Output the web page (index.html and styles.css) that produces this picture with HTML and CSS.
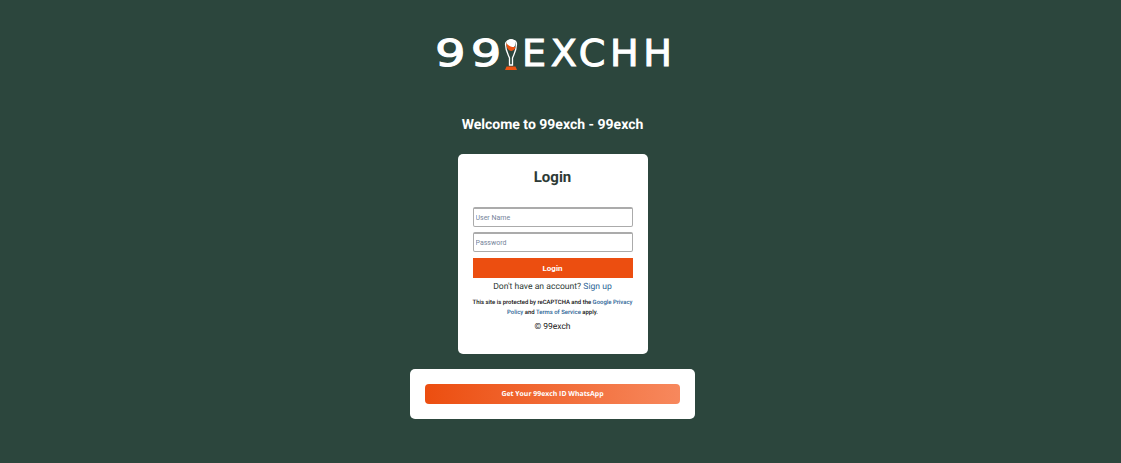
FILE: index.html
```html
<!DOCTYPE html>
<html lang="en">
<head>
  <meta charset="UTF-8">
  <title>99exch</title>
  <link rel="stylesheet" href="styles.css">
</head>
<body>
  <div class="pagina">
    <div class="logo">
      <span class="logo-txt logo-num">99</span>
      <svg class="copa" width="16" height="33" viewBox="0 0 16 33">
        <path d="M2.5 6 C2.5 1 13.5 1 13.5 6 C13.5 13 10.5 17 9.5 20 L9.5 27 L6.5 27 L6.5 20 C5.5 17 2.5 13 2.5 6 Z" fill="none" stroke="#fff" stroke-width="1.3"/>
        <circle cx="8" cy="5.5" r="4.6" fill="#fff"/>
        <path d="M3.4 5 C5 8 9 9.5 12.6 8.8 C12 12.5 8.5 14 5.8 12 C4 10.5 3.2 7.5 3.4 5 Z" fill="#ee5312"/>
        <path d="M3.5 28.5 H12.5 L14 32 H2 Z" fill="#ee5312"/>
      </svg>
      <span class="logo-txt logo-letras">EXCHH</span>
    </div>

    <h2 class="bienvenida">Welcome to 99exch - 99exch</h2>

    <div class="tarjeta">
      <h1>Login</h1>
      <input class="campo" type="text" placeholder="User Name">
      <input class="campo" type="password" placeholder="Password">
      <button class="btn-login">Login</button>
      <p class="registro">Don't have an account? <a href="#">Sign up</a></p>
      <p class="legal">This site is protected by reCAPTCHA and the <a href="#">Google Privacy Policy</a> and <a href="#">Terms of Service</a> apply.</p>
      <p class="copy">© 99exch</p>
    </div>

    <div class="promo">
      <a class="btn-whatsapp" href="#">Get Your 99exch ID WhatsApp</a>
    </div>
  </div>
</body>
</html>
```

FILE: styles.css
```css
:root {
  --color-fondo: #2c463d;
  --color-naranja: #ec4e10;
  --color-azul: #2a6496;
}

body {
  font-family: Roboto, 'Liberation Sans', sans-serif;
  background-color: var(--color-fondo);
  margin: 0;
  padding: 0;
  color: #2d3a36;
  text-rendering: geometricPrecision;
}

.pagina {
  display: flex;
  flex-direction: column;
  align-items: center;
  padding: 36px 16px 0 0;
}

/* LOGO */
.logo {
  display: flex;
  align-items: center;
  height: 36px;
  color: #fff;
}

.logo-txt {
  flex: none;
  font-family: 'DejaVu Sans', sans-serif;
  font-size: 37px;
  line-height: 36px;
  white-space: nowrap;
  -webkit-text-stroke: 1px #fff;
  transform-origin: left center;
}

.logo-num {
  width: 62px;
  letter-spacing: 4px;
  transform: scaleX(1.3);
}

.logo-letras {
  width: 148px;
  letter-spacing: 4.5px;
  transform: scaleX(1.03);
}

.copa {
  flex: none;
  margin: 0 3px 0 6px;
}

.bienvenida {
  margin: 43px 0 0;
  font-size: 14px;
  line-height: 20px;
  font-weight: 700;
  color: #fff;
}

/* TARJETA */
.tarjeta {
  box-sizing: border-box;
  width: 190px;
  height: 200px;
  margin-top: 19px;
  padding: 14px 15px 0;
  background-color: #fff;
  border-radius: 5px;
  text-align: center;
}

h1 {
  margin: 0 0 21px;
  font-size: 15px;
  line-height: 18px;
  font-weight: 700;
}

.campo {
  display: block;
  box-sizing: border-box;
  width: 100%;
  height: 20px;
  margin-bottom: 5px;
  padding: 0 2px;
  border: 1px solid #ababab;
  border-top-width: 2px;
  border-radius: 2px;
  font-family: Roboto, sans-serif;
  font-size: 7px;
}

.campo::placeholder {
  color: #76849a;
}

.btn-login {
  display: block;
  width: 100%;
  height: 20px;
  margin-top: 6px;
  padding: 0;
  border: none;
  background-color: var(--color-naranja);
  color: #fff;
  font-family: Roboto, sans-serif;
  font-size: 8px;
  font-weight: 700;
}

.registro {
  margin: 3px 0 0;
  font-size: 8.6px;
  line-height: 12px;
}

.registro a, .legal a {
  color: var(--color-azul);
  text-decoration: none;
}

.legal {
  margin: 5px 0 0;
  font-size: 5.95px;
  line-height: 9.5px;
  color: #111;
  font-weight: 500;
}

.copy {
  margin: 4px 0 0;
  font-size: 8.5px;
  line-height: 12px;
  color: #222;
}

/* WHATSAPP */
.promo {
  box-sizing: border-box;
  width: 285px;
  height: 50px;
  margin-top: 15px;
  padding: 15px;
  background-color: #fff;
  border-radius: 5px;
}

.btn-whatsapp {
  display: block;
  height: 20px;
  line-height: 21px;
  border-radius: 4px;
  background: linear-gradient(to right, var(--color-naranja), #f7885d);
  color: #fff;
  text-align: center;
  text-decoration: none;
  font-family: 'Open Sans', sans-serif;
  font-size: 6.9px;
  font-weight: 700;
}
```
